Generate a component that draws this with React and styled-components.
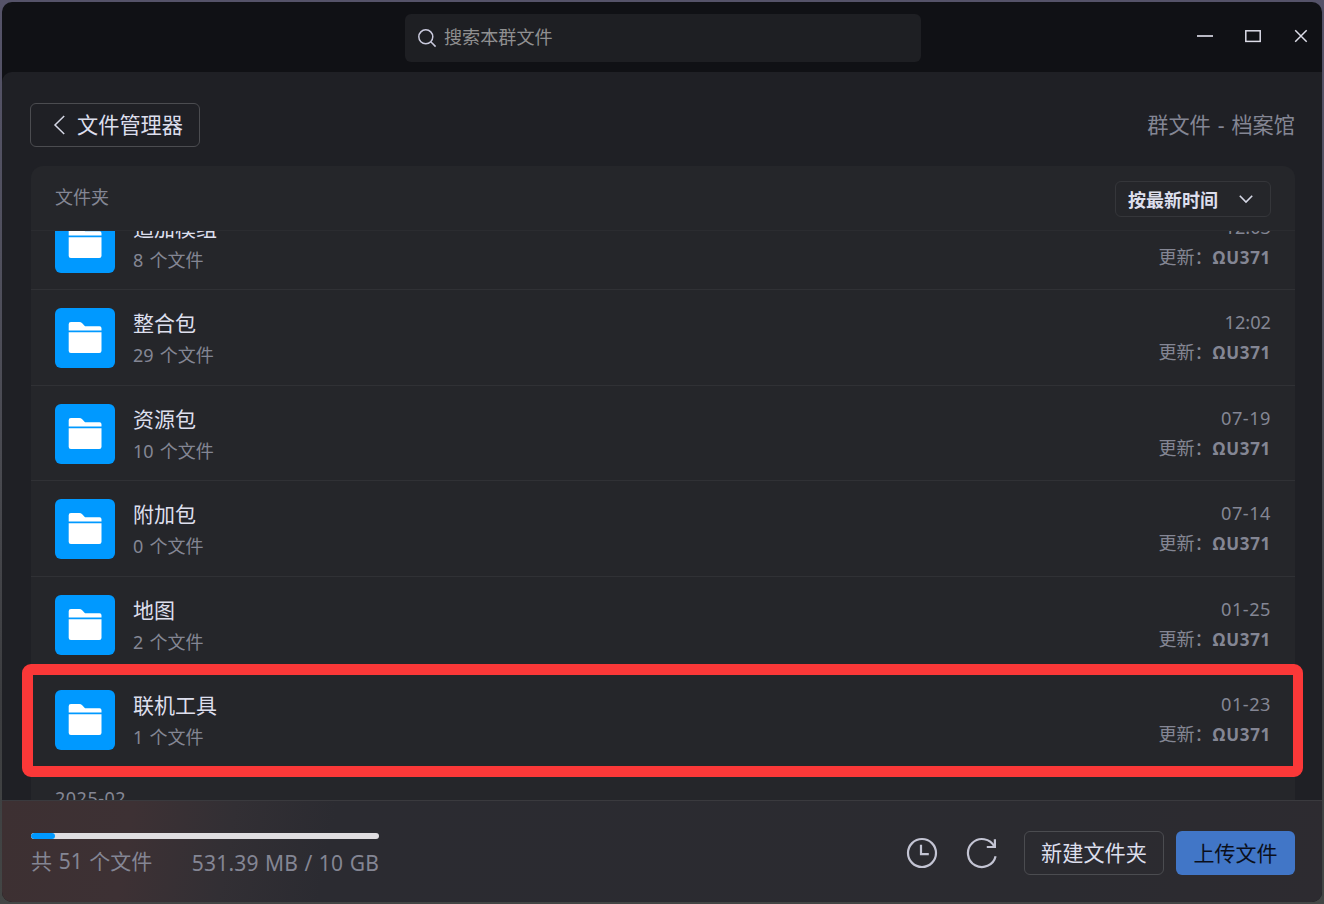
import React from "react";
import styled, { createGlobalStyle } from "styled-components";

const Global = createGlobalStyle`
  *, *::before, *::after { box-sizing: border-box; }
  body {
    margin: 0;
    overflow: hidden;
    font-family: "Noto Sans", "Noto Sans CJK SC", sans-serif;
    color: #dddfed;
  }
  button { font-family: inherit; margin: 0; padding: 0; color: inherit; background: none; }
`;

const Desktop = styled.div`
  width: 1324px;
  height: 904px;
  padding: 2px;
  background: linear-gradient(180deg, #555369 0, #50505e 250px, #48494f 480px, #3c3d40 700px, #434645 904px);
`;

const Window = styled.div`
  position: relative;
  display: flex;
  flex-direction: column;
  width: 1320px;
  height: 900px;
  border-radius: 10px;
  overflow: hidden;
  background: #101115;
`;

const TitleBar = styled.header`
  display: flex;
  justify-content: space-between;
  flex: 0 0 70px;
  padding: 12px 12px 0 403px;
`;

const Search = styled.div`
  display: flex;
  align-items: center;
  gap: 7px;
  width: 516px;
  height: 48px;
  padding: 0 12px;
  border-radius: 6px;
  background: #1e1f23;
  color: #909091;
  font-size: 18.1px;
  line-height: 46px;

  span { height: 48px; }
`;

const WindowControls = styled.div`
  display: flex;
  gap: 29px;
  height: 44px;
  align-items: center;
`;

const Body = styled.main`
  flex: 1;
  min-height: 0;
  display: flex;
  flex-direction: column;
  padding: 31px 27px 0 29px;
  border-top-left-radius: 10px;
  background: #1f2025;
`;

const Toolbar = styled.div`
  display: flex;
  justify-content: space-between;
  align-items: center;
  flex: 0 0 44px;
  margin-left: -1px;
`;

const OutlineButton = styled.button`
  display: flex;
  align-items: center;
  justify-content: ${(p) => p.$align || "center"};
  gap: 11px;
  width: ${(p) => p.$width}px;
  height: 44px;
  padding-left: ${(p) => p.$inset || 0}px;
  border: 1px solid #4b4c50;
  border-radius: 6px;
  font-size: 21.2px;
  line-height: 40px;
  white-space: nowrap;
`;

const PrimaryButton = styled.button`
  width: 119px;
  height: 44px;
  border: 0;
  border-radius: 6px;
  background: #4176c7;
  color: #0b101c;
  font-size: 21px;
  line-height: 40px;
`;

const PageTitle = styled.div`
  color: #848694;
  font-size: 21.2px;
  line-height: 40px;
  word-spacing: 1.4px;
`;

const Card = styled.section`
  flex: 1;
  min-height: 0;
  display: flex;
  flex-direction: column;
  margin-top: 19px;
  border-radius: 12px 12px 0 0;
  overflow: hidden;
  background: #25262a;
`;

const CardHead = styled.div`
  display: flex;
  justify-content: space-between;
  flex: 0 0 65px;
  padding: 15px 24px 0;
  border-bottom: 1px solid #2b2c30;
  color: #848694;
  font-size: 18px;
  line-height: 32px;
`;

const SortSelect = styled.button`
  display: flex;
  align-items: center;
  justify-content: space-between;
  width: 156px;
  height: 36px;
  padding: 0 16px 0 12px;
  border: 1px solid #35363a;
  border-radius: 6px;
  color: #dddfed;
  font-size: 18px;
  font-weight: 600;
  line-height: 32px;

  span { padding-top: 2px; }
`;

const ListViewport = styled.div`
  flex: 1;
  min-height: 0;
  overflow: hidden;
`;

const List = styled.div`
  margin-top: -36.5px;
`;

const Row = styled.div`
  display: flex;
  height: 95.5px;
  padding: 18px 24px 0;
  border-bottom: 1px solid #303135;
`;

const FolderTile = styled.div`
  width: 60px;
  height: 60px;
  border-radius: 6px;
  background: #0099ff;
`;

const Details = styled.div`
  flex: 1;
  margin-left: 18px;
`;

const Meta = styled.div`
  text-align: right;
`;

const Name = styled.div`
  height: 32px;
  font-size: 21px;
  line-height: 31px;
`;

const Count = styled.div`
  color: #848694;
  font-size: 18px;
  line-height: 31px;
  word-spacing: 1.4px;
`;

const Time = styled.div`
  height: 30px;
  color: #848694;
  font-size: 18.2px;
  letter-spacing: ${(p) => (p.$spread ? 0.5 : 0)}px;
  line-height: 28px;
`;

const Updater = styled.div`
  display: flex;
  justify-content: flex-end;
  color: #848694;
  font-size: 18px;
  line-height: 29px;

  b {
    font-size: 17px;
    font-weight: 700;
    letter-spacing: 0.7px;
  }
`;

const MonthLabel = styled.div`
  padding: 14px 24px 0;
  color: #848694;
  font-size: 18px;
  letter-spacing: 0.5px;
  line-height: 32px;
`;

const Highlight = styled.div`
  position: absolute;
  left: 20px;
  top: 662px;
  width: 1281px;
  height: 113px;
  border: solid #fb3838;
  border-width: 11px 10px 11px 11px;
  border-radius: 9px;
`;

const Footer = styled.footer`
  display: flex;
  justify-content: space-between;
  flex: 0 0 102px;
  padding: 30px 27px 0 29px;
  border-top: 1px solid #3a3a3e;
  background: linear-gradient(100deg, #3d3032 0, #3d3134 130px, #322f34 230px, #2b2b31 330px, #2b2b30 1050px, #2d2b30 100%);
`;

const Storage = styled.div`
  width: 348px;
  padding-top: 2px;
`;

const Track = styled.div`
  height: 6px;
  border-radius: 3px;
  overflow: hidden;
  background: #e0dee1;
`;

const Fill = styled.div`
  height: 6px;
  border-radius: 3px;
  background: #0099ff;
`;

const StorageText = styled.div`
  display: flex;
  justify-content: space-between;
  margin-top: 6px;
  color: #848694;
  font-size: 21px;
  white-space: nowrap;
`;

const FileTotal = styled.span`
  line-height: 32px;
  word-spacing: 1.2px;
`;

const Quota = styled.span`
  line-height: 36px;
  letter-spacing: 0.2px;
  word-spacing: 0.7px;
`;

const Actions = styled.div`
  display: flex;
  align-items: center;
  height: 44px;
  gap: 12px;
`;

const IconGroup = styled.div`
  display: flex;
  gap: 28px;
  margin-right: 14px;
`;

const folders = [
  ["追加模组", 8, "12:03"],
  ["整合包", 29, "12:02"],
  ["资源包", 10, "07-19"],
  ["附加包", 0, "07-14"],
  ["地图", 2, "01-25"],
  ["联机工具", 1, "01-23"],
];

const FolderIcon = () => (
  <svg width="60" height="60" viewBox="0 0 60 60" fill="#fff">
    <path d="M13.7 22.5V16.2Q13.7 14 15.9 14H24.3Q26 14 27.2 15.3L30 18.3H44.6Q46.5 18.3 46.5 20.2V22.5Z" />
    <path d="M13.7 24.3H46.5V42.8Q46.5 45 44.3 45H15.9Q13.7 45 13.7 42.8Z" />
  </svg>
);

const Folder = ({ name, count, time }) => (
  <Row>
    <FolderTile><FolderIcon /></FolderTile>
    <Details>
      <Name>{name}</Name>
      <Count>{count} 个文件</Count>
    </Details>
    <Meta>
      <Time $spread={time.includes("-")}>{time}</Time>
      <Updater><span>更新：</span><b>ΩU371</b></Updater>
    </Meta>
  </Row>
);

export default function App() {
  return (
    <Desktop>
      <Global />
      <Window>
        <TitleBar>
          <Search>
            <svg width="20" height="20" viewBox="0 0 20 20" fill="none" stroke="#c9c9dc" strokeWidth="1.5">
              <circle cx="8.8" cy="8.8" r="7" />
              <path d="M13.8 13.8L18.6 18.6" />
            </svg>
            <span>搜索本群文件</span>
          </Search>
          <WindowControls>
            <svg width="18" height="18" viewBox="0 0 18 18" stroke="#b9b9c4" strokeWidth="2"><path d="M1 9H17" /></svg>
            <svg width="18" height="18" viewBox="0 0 18 18" fill="none" stroke="#dddde8" strokeWidth="1.5"><rect x="2.8" y="3.8" width="14.4" height="10.6" /></svg>
            <svg width="20" height="18" viewBox="0 0 20 18" stroke="#dddde8" strokeWidth="1.5"><path d="M5.2 3.3L16.7 14.8M16.7 3.3L5.2 14.8" /></svg>
          </WindowControls>
        </TitleBar>
        <Body>
          <Toolbar>
            <OutlineButton $width={170} $align="flex-start" $inset={22}>
              <svg width="13" height="22" viewBox="0 0 13 22" fill="none" stroke="#d5d7e5" strokeWidth="1.5"><path d="M11.2 2L2 11L11.2 20" /></svg>
              <span>文件管理器</span>
            </OutlineButton>
            <PageTitle>群文件 - 档案馆</PageTitle>
          </Toolbar>
          <Card>
            <CardHead>
              <span>文件夹</span>
              <SortSelect>
                <span>按最新时间</span>
                <svg width="16" height="10" viewBox="0 0 16 10" fill="none" stroke="#d5d7e5" strokeWidth="1.6"><path d="M1.8 1.8L8 8L14.2 1.8" /></svg>
              </SortSelect>
            </CardHead>
            <ListViewport>
              <List>
                {folders.map(([name, count, time]) => (
                  <Folder key={name} name={name} count={count} time={time} />
                ))}
                <MonthLabel>2025-02</MonthLabel>
              </List>
            </ListViewport>
          </Card>
        </Body>
        <Footer>
          <Storage>
            <Track><Fill style={{ width: `${(24 / 348) * 100}%` }} /></Track>
            <StorageText><FileTotal>共 51 个文件</FileTotal><Quota>531.39 MB / 10 GB</Quota></StorageText>
          </Storage>
          <Actions>
            <IconGroup>
              <svg width="32" height="32" viewBox="0 0 32 32" fill="none" stroke="#c3c4d3" strokeWidth="2.2">
                <circle cx="16" cy="16" r="14" />
                <path d="M15 7.8V17.2H22.8" />
              </svg>
              <svg width="32" height="32" viewBox="0 0 32 32" fill="none" stroke="#c3c4d3" strokeWidth="2.2">
                <path d="M29.6 19.2A14 14 0 1 1 28.4 9.6" />
                <path d="M28.9 2.2V10H20.8" />
              </svg>
            </IconGroup>
            <OutlineButton $width={140}>新建文件夹</OutlineButton>
            <PrimaryButton>上传文件</PrimaryButton>
          </Actions>
        </Footer>
        <Highlight />
      </Window>
    </Desktop>
  );
}
